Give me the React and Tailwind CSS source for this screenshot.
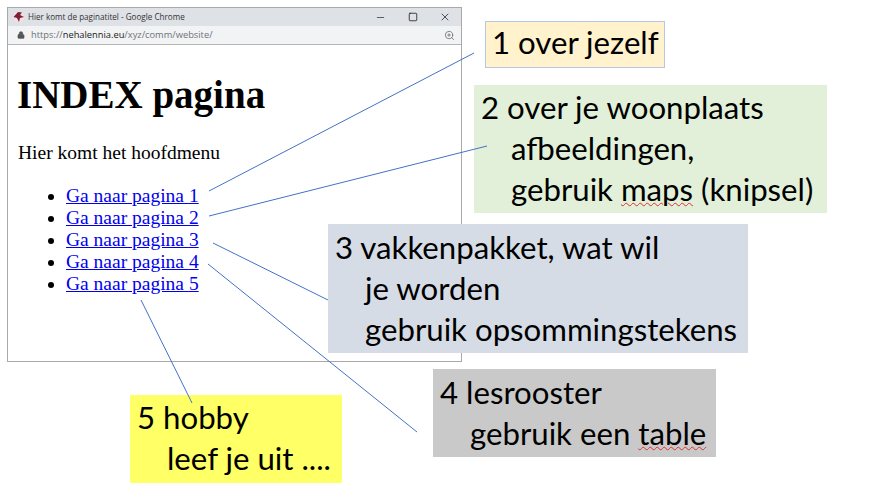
import React from "react";
import { Lock, Minus, Square, X, ZoomIn } from "lucide-react";

const pages = [1, 2, 3, 4, 5];

function BrowserWindow() {
    return (
        <div className="absolute left-[7px] top-[7px] w-[455px] h-[355px] border border-[#a9a9a9] bg-white flex flex-col">
            {/* Title bar */}
            <div className="h-[18px] bg-[#dee1e6] flex items-center pl-[5px] font-['Open_Sans',sans-serif] text-[8.1px] text-[#333]">
                <svg className="w-[12px] h-[12px] shrink-0" viewBox="0 0 12 12">
                    <circle cx="6" cy="6" r="5.5" fill="#f3dfe3" />
                    <path d="M0.5 6 L5 1 L9 1.5 L7 4 L11 6 L7 7 L6 11 L4 7 Z" fill="#7d1f35" />
                </svg>
                <span className="ml-[3px]">Hier komt de paginatitel - Google Chrome</span>
                <div className="ml-auto flex items-center text-[#222]">
                    <Minus className="w-[11px] h-[11px] mr-[22px]" strokeWidth={1.5} />
                    <Square className="w-[10px] h-[10px] mr-[21px]" strokeWidth={2} />
                    <X className="w-[12px] h-[12px] mr-[10px]" strokeWidth={1.5} />
                </div>
            </div>
            {/* Address bar */}
            <div className="h-[19px] bg-[#f1f3f4] border-b border-[#b5b5b5] flex items-center pl-[9px] pr-[6px] font-['Open_Sans',sans-serif] text-[9.3px] text-[#6f7276]">
                <Lock className="w-[8px] h-[8px] text-[#555] fill-[#555]" strokeWidth={2} />
                <span className="ml-[6px]">
                    https://<span className="text-[#222]">nehalennia.eu</span>/xyz/comm/website/
                </span>
                <ZoomIn className="ml-auto w-[11px] h-[11px]" strokeWidth={1.8} />
            </div>
            {/* Page */}
            <div className="pl-[10px] font-['Liberation_Serif',serif] text-black">
                <h1 className="mt-[27px] -ml-[1px] text-[39px] leading-[46px] font-bold">INDEX pagina</h1>
                <p className="mt-[24px] text-[19.5px] leading-[22px]">Hier komt het hoofdmenu</p>
                <ul className="mt-[21px] pl-[48px] list-disc text-[19.5px] leading-[22px]">
                    {pages.map((n) => (
                        <li key={n}>
                            <a href="#" className="text-[#0000ee] underline">Ga naar pagina {n}</a>
                        </li>
                    ))}
                </ul>
            </div>
        </div>
    );
}

function Note({ className, children }) {
    return (
        <div className={`absolute font-['Lato',sans-serif] text-[31.2px] leading-[41px] text-black whitespace-nowrap ${className}`}>
            {children}
        </div>
    );
}

const squiggle = "underline decoration-wavy decoration-[#e03030] decoration-1 underline-offset-[1px]";

export default function App() {
    return (
        <div className="relative w-[883px] h-[493px] bg-white overflow-hidden">
            <BrowserWindow />

            <Note className="left-[485px] top-[21px] w-[180px] h-[47px] bg-[#fff2cc] border border-[#b4c7e7] pl-[6px]">
                1 over jezelf
            </Note>
            <Note className="left-[474px] top-[85px] w-[353px] h-[128px] bg-[#e2f0d9] pl-[7px] pt-[2px]">
                <div>2 over je woonplaats</div>
                <div className="pl-[30px]">afbeeldingen,</div>
                <div className="pl-[30px]">gebruik <span className={squiggle}>maps</span> (knipsel)</div>
            </Note>
            <Note className="left-[328px] top-[224px] w-[420px] h-[129px] bg-[#d6dce5] pl-[7px] pt-[3px]">
                <div>3 vakkenpakket, wat wil</div>
                <div className="pl-[30px]">je worden</div>
                <div className="pl-[30px]">gebruik opsommingstekens</div>
            </Note>
            <Note className="left-[433px] top-[369px] w-[283px] h-[88px] bg-[#c9c9c9] pl-[7px] pt-[3px]">
                <div>4 lesrooster</div>
                <div className="pl-[30px]">gebruik een <span className={squiggle}>table</span></div>
            </Note>
            <Note className="left-[130px] top-[395px] w-[212px] h-[88px] bg-[#ffff66] pl-[7px] pt-[2px]">
                <div>5 hobby</div>
                <div className="pl-[30px]">leef je uit ....</div>
            </Note>

            {/* Connector lines */}
            <svg className="absolute inset-0 pointer-events-none" width="883" height="493" stroke="#4472c4" strokeWidth="1" fill="none">
                <line x1="209" y1="191" x2="474" y2="53" />
                <line x1="209" y1="216" x2="487" y2="146" />
                <line x1="213" y1="243" x2="328" y2="300" />
                <line x1="208" y1="264" x2="417" y2="432" />
                <line x1="141" y1="300" x2="192" y2="403" />
            </svg>
        </div>
    );
}
